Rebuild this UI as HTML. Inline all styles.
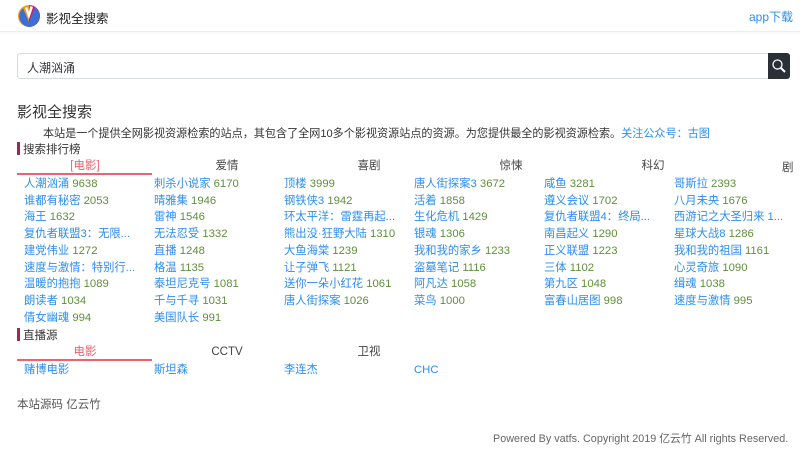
<!DOCTYPE html>
<html><head><meta charset="utf-8"><style>
*{margin:0;padding:0;box-sizing:border-box}
body{width:800px;height:450px;overflow:hidden;background:#fff;font-family:"Liberation Sans","Noto Sans CJK SC",sans-serif;font-size:12px;color:#333;position:relative}
.a{position:absolute;white-space:nowrap}
.hdr{position:absolute;left:0;top:0;width:800px;height:32px;border-bottom:1px solid #eee;box-shadow:0 1px 2px rgba(0,0,0,.04)}
.blue{color:#2b8ef0}
.g{color:#5f8f3a;font-weight:normal}
.col{position:absolute;top:176px;line-height:16.7px;font-size:11.3px}
.col div{white-space:nowrap}
.col span{color:#2b8ef0}
.bar{position:absolute;left:17px;width:3px;height:13px;background:#9b2a5a}
.tab{position:absolute;width:142px;text-align:center;font-size:11.5px;color:#444;line-height:14px}
</style></head><body>
<div class="hdr"></div>
<svg class="a" style="left:17px;top:4px" width="24" height="24" viewBox="0 0 24 24">
<circle cx="12" cy="12" r="11" fill="#f39a1f"/>
<path d="M12 1A11 11 0 0 1 23 12 11 11 0 0 1 12 23Z" fill="#c2207a"/>
<path d="M6 4 L12 18 L18 3 L20 5 A11 11 0 0 1 12 23 A11 11 0 0 1 3 8Z" fill="#3b6fd6"/>
<path d="M8 4 L12 15 L16 3 L13 2 L12 8 L10 3Z" fill="#fff"/>
</svg>
<div class="a" style="left:46px;top:8px;font-size:12.5px;color:#222">影视全搜索</div>
<div class="a blue" style="left:749px;top:8px;font-size:12px">app下载</div>
<div class="a" style="left:17px;top:53px;width:752px;height:26px;border:1px solid #d6dbe0;border-radius:3px 0 0 3px"></div>
<div class="a" style="left:27px;top:59px;font-size:12px;color:#333">人潮汹涌</div>
<div class="a" style="left:768px;top:53px;width:22px;height:26px;background:#2b2f36;border-radius:0 3px 3px 0">
<svg width="22" height="26" viewBox="0 0 22 26"><circle cx="9.5" cy="11.5" r="4.5" fill="none" stroke="#fff" stroke-width="1.3"/><path d="M13 15L17 19" stroke="#fff" stroke-width="2"/></svg></div>
<div class="a" style="left:17px;top:101px;font-size:15px;color:#333">影视全搜索</div>
<div class="a" style="left:43px;top:125px;font-size:11.1px;color:#333">本站是一个提供全网影视资源检索的站点，其包含了全网10多个影视资源站点的资源。为您提供最全的影视资源检索。<span class="blue">关注公众号：古图</span></div>
<div class="bar" style="top:142px"></div>
<div class="a" style="left:23px;top:141px;font-size:11.5px;color:#333">搜索排行榜</div>
<div class="tab" style="left:14px;top:159px;color:#f0606e">[电影]</div>
<div class="a" style="left:17px;top:173px;width:135px;height:2px;background:#f0606e"></div>
<div class="tab" style="left:156px;top:159px">爱情</div>
<div class="tab" style="left:298px;top:159px">喜剧</div>
<div class="tab" style="left:440px;top:159px">惊悚</div>
<div class="tab" style="left:582px;top:159px">科幻</div>
<div class="a" style="left:782px;top:159px;color:#444;font-size:11.5px">剧</div>
<div class="col" style="left:24px"><div><span>人潮汹涌</span> <b class="g">9638</b></div><div><span>谁都有秘密</span> <b class="g">2053</b></div><div><span>海王</span> <b class="g">1632</b></div><div><span>复仇者联盟3：无限...</span></div><div><span>建党伟业</span> <b class="g">1272</b></div><div><span>速度与激情：特别行...</span></div><div><span>温暖的抱抱</span> <b class="g">1089</b></div><div><span>朗读者</span> <b class="g">1034</b></div><div><span>倩女幽魂</span> <b class="g">994</b></div></div>
<div class="col" style="left:154px"><div><span>刺杀小说家</span> <b class="g">6170</b></div><div><span>晴雅集</span> <b class="g">1946</b></div><div><span>雷神</span> <b class="g">1546</b></div><div><span>无法忍受</span> <b class="g">1332</b></div><div><span>直播</span> <b class="g">1248</b></div><div><span>格温</span> <b class="g">1135</b></div><div><span>泰坦尼克号</span> <b class="g">1081</b></div><div><span>千与千寻</span> <b class="g">1031</b></div><div><span>美国队长</span> <b class="g">991</b></div></div>
<div class="col" style="left:284px"><div><span>顶楼</span> <b class="g">3999</b></div><div><span>钢铁侠3</span> <b class="g">1942</b></div><div><span>环太平洋：雷霆再起...</span></div><div><span>熊出没·狂野大陆</span> <b class="g">1310</b></div><div><span>大鱼海棠</span> <b class="g">1239</b></div><div><span>让子弹飞</span> <b class="g">1121</b></div><div><span>送你一朵小红花</span> <b class="g">1061</b></div><div><span>唐人街探案</span> <b class="g">1026</b></div></div>
<div class="col" style="left:414px"><div><span>唐人街探案3</span> <b class="g">3672</b></div><div><span>活着</span> <b class="g">1858</b></div><div><span>生化危机</span> <b class="g">1429</b></div><div><span>银魂</span> <b class="g">1306</b></div><div><span>我和我的家乡</span> <b class="g">1233</b></div><div><span>盗墓笔记</span> <b class="g">1116</b></div><div><span>阿凡达</span> <b class="g">1058</b></div><div><span>菜鸟</span> <b class="g">1000</b></div></div>
<div class="col" style="left:544px"><div><span>咸鱼</span> <b class="g">3281</b></div><div><span>遵义会议</span> <b class="g">1702</b></div><div><span>复仇者联盟4：终局...</span></div><div><span>南昌起义</span> <b class="g">1290</b></div><div><span>正义联盟</span> <b class="g">1223</b></div><div><span>三体</span> <b class="g">1102</b></div><div><span>第九区</span> <b class="g">1048</b></div><div><span>富春山居图</span> <b class="g">998</b></div></div>
<div class="col" style="left:674px"><div><span>哥斯拉</span> <b class="g">2393</b></div><div><span>八月未央</span> <b class="g">1676</b></div><div><span>西游记之大圣归来 1...</span></div><div><span>星球大战8</span> <b class="g">1286</b></div><div><span>我和我的祖国</span> <b class="g">1161</b></div><div><span>心灵奇旅</span> <b class="g">1090</b></div><div><span>缉魂</span> <b class="g">1038</b></div><div><span>速度与激情</span> <b class="g">995</b></div></div>
<div class="bar" style="top:328px"></div>
<div class="a" style="left:23px;top:327px;font-size:11.5px;color:#333">直播源</div>
<div class="tab" style="left:14px;top:345px;color:#f0606e">电影</div>
<div class="a" style="left:17px;top:359px;width:135px;height:2px;background:#f0606e"></div>
<div class="tab" style="left:156px;top:345px">CCTV</div>
<div class="tab" style="left:298px;top:345px">卫视</div>
<div class="a blue" style="left:24px;top:362px;font-size:11.3px;line-height:16px">赌博电影</div>
<div class="a blue" style="left:154px;top:362px;font-size:11.3px;line-height:16px">斯坦森</div>
<div class="a blue" style="left:284px;top:362px;font-size:11.3px;line-height:16px">李连杰</div>
<div class="a blue" style="left:414px;top:362px;font-size:11.3px;line-height:16px">CHC</div>
<div class="a" style="left:17px;top:396px;color:#555;font-size:11.5px">本站源码 亿云竹</div>
<div class="a" style="left:493px;top:430px;font-size:10.8px;color:#666">Powered By vatfs. Copyright 2019 亿云竹 All rights Reserved.</div>
</body></html>
